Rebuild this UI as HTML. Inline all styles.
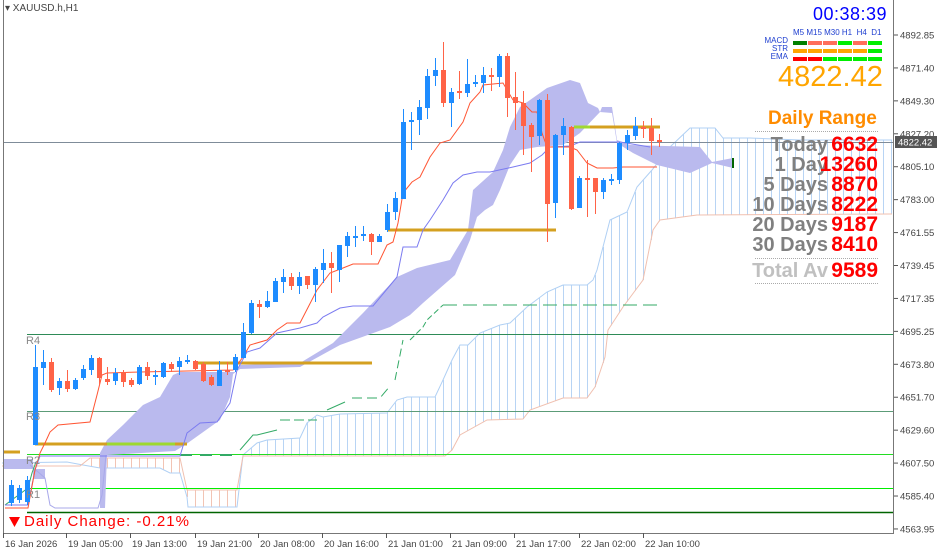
<!DOCTYPE html>
<html><head><meta charset="utf-8"><style>
html,body{margin:0;padding:0;background:#fff;width:939px;height:554px;overflow:hidden;font-family:"Liberation Sans",sans-serif}
#c{position:absolute;left:0;top:0}
.t{position:absolute;white-space:nowrap}
.lab{position:absolute;right:111px;font-weight:bold;font-size:20px;color:#808080;text-align:right;line-height:20px}
.num{position:absolute;right:61px;font-weight:bold;font-size:21px;color:#ff0000;text-align:right;line-height:20px}
.dot{position:absolute;left:755px;width:123px;border-top:1px dotted #aaa;height:0}
.bar{position:absolute;height:4px;width:14px}
</style></head><body>
<svg id="c" width="939" height="554" xmlns="http://www.w3.org/2000/svg"></svg>

<div class="t" style="left:5px;top:3px;font-size:10px;color:#444">&#9662; XAUUSD.h,H1</div>

<div class="t" style="left:813px;top:4px;font-size:18px;color:#0000ff;letter-spacing:0.5px">00:38:39</div>
<div class="t" style="left:793px;top:28px;font-size:8px;color:#2040d0;word-spacing:0px">M5 M15 M30 H1&nbsp; H4&nbsp; D1</div>
<div class="t" style="right:151px;top:37px;font-size:8px;color:#2040d0;line-height:8px;text-align:right">MACD<br>STR<br>EMA</div>
<div class="t" style="left:778px;top:61px;font-size:29px;color:#ffa500">4822.42</div>
<div class="t" style="left:768px;top:108px;font-size:19px;font-weight:bold;color:#ff8c00">Daily Range</div>
<div class="dot" style="top:131px"></div>
<div class="lab" style="top:135px">Today</div><div class="num" style="top:135px">6632</div>
<div class="lab" style="top:155px">1 Day</div><div class="num" style="top:155px">13260</div>
<div class="lab" style="top:175px">5 Days</div><div class="num" style="top:175px">8870</div>
<div class="lab" style="top:195px">10 Days</div><div class="num" style="top:195px">8222</div>
<div class="lab" style="top:215px">20 Days</div><div class="num" style="top:215px">9187</div>
<div class="lab" style="top:235px">30 Days</div><div class="num" style="top:235px">8410</div>
<div class="dot" style="top:258px"></div>
<div class="lab" style="top:261px;color:#c0c0c0">Total Av</div><div class="num" style="top:261px">9589</div>
<div class="dot" style="top:283px"></div>

<div class="t" style="left:24px;top:513px;font-size:15px;color:#ff0000;letter-spacing:1px">Daily Change: -0.21%</div>
<div class="t" style="left:26px;top:335px;font-size:11px;color:#888">R4</div>
<div class="t" style="left:26px;top:411px;font-size:11px;color:#888">R3</div>
<div class="t" style="left:26px;top:455px;font-size:11px;color:#888">R2</div>
<div class="t" style="left:26px;top:489px;font-size:11px;color:#888">R1</div>

<script>
var S=document.getElementById('c'),NS='http://www.w3.org/2000/svg';
function el(n,a){var e=document.createElementNS(NS,n);for(var k in a)e.setAttribute(k,a[k]);S.appendChild(e);return e}
function pl(p,c,w,extra){var a={points:p.map(function(q){return q.join(',')}).join(' '),fill:'none',stroke:c,'stroke-width':w||1};for(var k in extra)a[k]=extra[k];return el('polyline',a)}
function pg(p,c){return el('polygon',{points:p.map(function(q){return q.join(',')}).join(' '),fill:c})}
function line(x1,y1,x2,y2,c,w,d){var a={x1:x1,y1:y1,x2:x2,y2:y2,stroke:c,'stroke-width':w||1};if(d)a['stroke-dasharray']=d;return el('line',a)}
function interp(P,x){for(var i=0;i<P.length-1;i++){if(x>=P[i][0]&&x<=P[i+1][0]){var t=(x-P[i][0])/((P[i+1][0]-P[i][0])||1);return P[i][1]+t*(P[i+1][1]-P[i][1])}}return null}

var blue=[[2,463],[67,462],[83,465],[100,468],[160,468],[170,473],[180,473],[187,497],[188,507],[237,507],[243,455],[257,443],[267,440],[300,438],[307,423],[317,415],[323,417],[340,414],[387,413],[397,400],[407,397],[435,397],[443,380],[452,360],[460,345],[468,345],[480,333],[500,325],[510,323],[527,307],[547,292],[563,285],[587,285],[593,280],[597,270],[610,220],[627,212],[637,187],[652,170],[670,147],[690,128],[715,128],[723,138],[750,138],[800,140],[892,140]];
var pink=[[2,466],[80,466],[90,458],[180,458],[187,490],[237,490],[243,456],[445,456],[452,450],[460,435],[487,420],[523,419],[530,410],[563,398],[587,398],[595,387],[605,357],[608,330],[623,307],[643,280],[653,230],[660,220],[697,215],[892,214]];
for(var x=91;x<892;x+=8){var b=interp(blue,x),p=interp(pink,x);if(b==null||p==null)continue;if(Math.abs(b-p)<3)continue;line(x+.5,b,x+.5,p,b<p?'#b8d4f4':'#f2c4b4',1)}
pl(blue,'#b0d0f4',1);pl(pink,'#f0c0b0',1);

line(3,142.5,893,142.5,'#7f8c99',1);
line(27,334.5,893,334.5,'#2e8b57',1);
line(27,411.5,893,411.5,'#5c9c78',1);
line(27,454.5,893,454.5,'#22dd22',1);
line(27,488.5,893,488.5,'#00ee00',1);
line(27,512.5,893,512.5,'#006400',1.5);

var CL='#babaee';
pg([[3,459],[33,459],[33,469],[3,469]],CL);
pg([[33,469],[45,469],[45,479],[33,479]],CL);
pg([[100,453],[107,440],[123,425],[143,405],[160,397],[173,375],[180,372],[235,372],[240,365],[300,363],[333,343],[363,313],[397,277],[417,268],[450,260],[468,230],[473,190],[493,172],[503,150],[510,127],[520,107],[530,100],[547,88],[570,80],[580,83],[588,103],[598,108],[600,112],[580,133],[563,145],[537,147],[520,150],[510,165],[500,190],[493,205],[485,210],[477,217],[470,240],[455,275],[423,303],[410,315],[390,327],[340,345],[300,367],[240,369],[233,374],[230,397],[220,420],[185,445],[175,451],[107,455],[105,508],[100,508]],CL);
pg([[600,112],[602,107],[612,107],[617,140],[630,145],[700,147],[712,162],[733,158],[733,168],[712,163],[690,173],[657,165],[633,153],[617,143],[612,113]],CL);
line(733,158,733,168,'#006400',2);
pl([[30,465],[45,478],[50,505],[55,508],[98,508],[102,495],[106,455]],'#a8a8ea',1);

line(3,452,20,452,'#d4a020',3);
line(35,444,187,444,'#d4a020',3);
line(107,444,175,444,'#9ed830',3);
line(195,363,372,363,'#d4a020',3);
line(387,230,556,230,'#d4a020',3);
line(574,127,660,127,'#d4a020',3);
line(574,127,590,127,'#a0d830',3);

pl([[5,505],[28,488],[32,473],[36,462]],'#33aa66',1);
line(180,455,233,455,'#33aa66',2,'12 8');
pl([[240,450],[253,435],[257,435],[277,430]],'#33aa66',1);
pl([[280,420],[317,420]],'#33aa66',1,{'stroke-dasharray':'10 4'});
pl([[327,410],[345,402]],'#33aa66',1);
pl([[352,398],[380,398],[390,386]],'#33aa66',1,{'stroke-dasharray':'10 5'});
pl([[395,380],[403,340]],'#33aa66',1,{'stroke-dasharray':'8 4'});
pl([[410,340],[423,327],[427,320],[443,305]],'#33aa66',1,{'stroke-dasharray':'6 3'});
line(443,305,660,305,'#33aa66',1,'14 6');

pl([[5,505],[28,505],[35,470],[40,456],[180,456],[187,433],[200,423],[217,422],[230,403],[237,370],[247,352],[260,348],[277,333],[300,328],[317,323],[323,317],[340,308],[353,306],[373,306],[397,277],[403,247],[417,247],[423,230],[430,220],[443,200],[453,183],[463,175],[477,172],[490,172],[513,167],[530,163],[542,155],[550,147],[570,146],[580,142],[620,142],[650,147]],'#7b7bf0',1);
pl([[5,508],[28,508],[35,470],[40,453],[45,443],[50,432],[58,425],[90,422],[97,395],[102,375],[107,373],[140,372],[233,370],[243,357],[250,345],[267,340],[277,330],[287,323],[300,323],[317,290],[330,273],[343,268],[353,264],[378,264],[387,245],[393,242],[398,223],[403,193],[412,182],[420,177],[430,157],[440,143],[450,140],[463,122],[470,103],[480,92],[483,85],[503,83],[513,100],[523,103],[532,112],[537,112],[542,133],[547,147],[570,147],[577,150],[587,163],[597,168],[613,168],[623,167],[657,167]],'#ff5533',1);

var C=[[11,503,485,480,506],[19,500,488,485,503],[27,502,480,476,505],[35,445,367,345,445],[43,368,362,350,385],[51,362,390,358,392],[59,388,381,378,395],[67,381,389,370,392],[75,389,380,378,390],[83,378,369,365,380],[91,370,358,355,375],[99,358,378,357,385],[107,379,382,367,385],[115,381,373,368,385],[123,372,382,370,387],[131,380,385,378,387],[139,384,367,365,385],[147,367,376,362,380],[155,377,375,370,385],[163,377,363,362,378],[171,364,369,362,372],[179,367,361,357,375],[187,362,360,355,364],[195,361,369,360,370],[203,364,381,362,382],[211,377,385,375,386],[219,386,370,361,386],[227,370,372,362,375],[235,370,357,354,372],[243,358,332,323,358],[251,333,303,300,334],[259,304,307,300,318],[267,307,301,291,308],[275,302,281,278,302],[283,282,277,269,293],[291,277,286,273,290],[299,286,277,272,294],[307,276,285,276,289],[315,285,269,267,302],[323,270,263,249,283],[331,263,268,252,293],[339,270,245,245,282],[347,246,236,232,257],[355,237,236,226,247],[363,236,234,226,241],[371,234,242,233,255],[379,242,236,234,242],[387,230,212,204,232],[395,212,198,192,220],[403,199,122,109,199],[411,122,120,112,150],[419,120,107,100,135],[427,108,76,69,119],[435,76,70,58,86],[443,70,103,42,107],[451,103,92,88,127],[459,91,93,71,99],[467,93,84,59,97],[475,84,82,75,87],[483,83,75,67,93],[491,75,77,68,91],[499,77,56,54,87],[507,56,98,53,117],[515,97,103,72,130],[523,103,126,91,155],[531,125,137,123,172],[539,136,100,99,145],[547,100,204,94,242],[555,203,135,134,218],[563,135,126,118,155],[571,127,209,126,210],[579,208,178,176,208],[587,178,179,160,217],[595,178,192,178,214],[603,192,180,178,199],[611,180,179,174,185],[619,180,143,142,184],[627,143,135,130,150],[635,136,126,117,140],[643,127,129,121,138],[651,128,141,118,155],[659,140,141,134,147]];
C.forEach(function(c){var up=c[2]<c[1],col=up?'#1e8cff':'#ff6347';line(c[0]+.5,c[3],c[0]+.5,c[4],col,1);var t=Math.min(c[1],c[2]),h=Math.max(2,Math.abs(c[1]-c[2]));el('rect',{x:c[0]-2,y:t,width:5,height:h,fill:col})});

line(3.5,0,3.5,533,'#777',1);line(3,533.5,894,533.5,'#777',1);line(893.5,0,893.5,534,'#777',1);
var L=['4892.85','4871.40','4849.30','4827.20','4805.10','4783.00','4761.55','4739.45','4717.35','4695.25','4673.80','4651.70','4629.60','4607.50','4585.40','4563.95'];
L.forEach(function(s,i){var y=35+i*32.93;line(894,y,898,y,'#555',1);var t=el('text',{x:900,y:y+3.5,'font-size':9.5,fill:'#444','font-family':'Liberation Sans, sans-serif'});t.textContent=s});
el('rect',{x:895,y:136,width:42,height:12,fill:'#555'});
var tt=el('text',{x:898,y:145.5,'font-size':9.5,fill:'#fff','font-family':'Liberation Sans, sans-serif'});tt.textContent='4822.42';
var T=[[3,'16 Jan 2026'],[66,'19 Jan 05:00'],[130,'19 Jan 13:00'],[195,'19 Jan 21:00'],[258,'20 Jan 08:00'],[322,'20 Jan 16:00'],[386,'21 Jan 01:00'],[450,'21 Jan 09:00'],[514,'21 Jan 17:00'],[579,'22 Jan 02:00'],[643,'22 Jan 10:00']];
T.forEach(function(a){line(a[0]+.5,533,a[0]+.5,538,'#555',1);var t=el('text',{x:a[0]+2,y:547,'font-size':9.5,fill:'#444','font-family':'Liberation Sans, sans-serif'});t.textContent=a[1]});
pg([[9,517],[20,517],[14.5,527]],'#ff0000');
</script>

<div class="bar" style="left:793px;top:41px;background:#008000"></div><div class="bar" style="left:808px;top:41px;background:#ff6f5a"></div><div class="bar" style="left:823px;top:41px;background:#ff6f5a"></div><div class="bar" style="left:838px;top:41px;background:#00ee00"></div><div class="bar" style="left:853px;top:41px;background:#ff6f5a"></div><div class="bar" style="left:868px;top:41px;background:#00ee00"></div>
<div class="bar" style="left:793px;top:49px;background:#ffa500"></div><div class="bar" style="left:808px;top:49px;background:#ffa500"></div><div class="bar" style="left:823px;top:49px;background:#ffa500"></div><div class="bar" style="left:838px;top:49px;background:#ffa500"></div><div class="bar" style="left:853px;top:49px;background:#ffa500"></div><div class="bar" style="left:868px;top:49px;background:#00ee00"></div>
<div class="bar" style="left:793px;top:57px;background:#ff0000"></div><div class="bar" style="left:808px;top:57px;background:#ff0000"></div><div class="bar" style="left:823px;top:57px;background:#00ee00"></div><div class="bar" style="left:838px;top:57px;background:#00ee00"></div><div class="bar" style="left:853px;top:57px;background:#00ee00"></div><div class="bar" style="left:868px;top:57px;background:#00ee00"></div>
</body></html>
